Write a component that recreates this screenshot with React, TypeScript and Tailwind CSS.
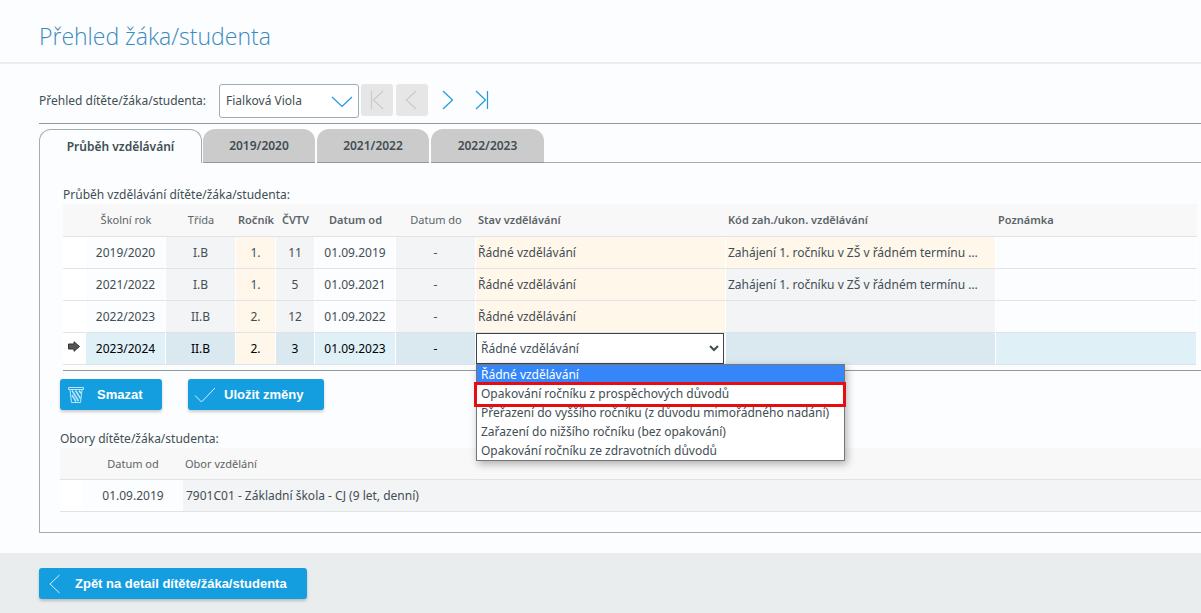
import { useState } from 'react'

type Row = { year: string; cls: string; grade: string; ctv: string; from: string; to: string; code: string }

const ROWS: Row[] = [
  { year: '2019/2020', cls: 'I.B', grade: '1.', ctv: '11', from: '01.09.2019', to: '-', code: 'Zahájení 1. ročníku v ZŠ v řádném termínu …' },
  { year: '2021/2022', cls: 'I.B', grade: '1.', ctv: '5', from: '01.09.2021', to: '-', code: 'Zahájení 1. ročníku v ZŠ v řádném termínu …' },
  { year: '2022/2023', cls: 'II.B', grade: '2.', ctv: '12', from: '01.09.2022', to: '-', code: '' },
  { year: '2023/2024', cls: 'II.B', grade: '2.', ctv: '3', from: '01.09.2023', to: '-', code: '' },
]

const STATES = [
  'Řádné vzdělávání',
  'Opakování ročníku z prospěchových důvodů',
  'Přeřazení do vyššího ročníku (z důvodu mimořádného nadání)',
  'Zařazení do nižšího ročníku (bez opakování)',
  'Opakování ročníku ze zdravotních důvodů',
]

const TABS = ['Průběh vzdělávání', '2019/2020', '2021/2022', '2022/2023']

const BTN = 'flex h-[31px] items-center rounded-[3px] bg-[#149edf] text-white shadow-[0_2px_3px_rgba(0,0,0,0.2)]'
const BTN_TEXT = "font-['Liberation_Sans',sans-serif] text-[13px] font-bold"

function NavIcon({ d, className }: { d: string; className: string }) {
  return (
    <svg viewBox="0 0 32 32" className={`size-8 ${className}`} fill="none" stroke="currentColor" strokeWidth="1.2" aria-hidden="true">
      <path d={d} />
    </svg>
  )
}

function Toolbar() {
  return (
    <div className="flex items-start border-b border-[#8f999f] pb-[5px]">
      <label htmlFor="student" className="mr-1.5 w-[174px] whitespace-nowrap leading-[34px]">Přehled dítěte/žáka/studenta:</label>
      <div className="relative mr-0.5">
        <select id="student" className="h-[34px] w-[140px] appearance-none rounded-[3px] border border-[#a0adb4] bg-white px-1.5">
          <option>Fialková Viola</option>
        </select>
        <svg viewBox="0 0 22 12" className="pointer-events-none absolute right-1.5 top-3 h-3 w-[22px] text-[#1b9be0]" fill="none" stroke="currentColor" strokeWidth="1.2" aria-hidden="true">
          <path d="M1 1l10 9.500L21 1" />
        </svg>
      </div>
      <div className="flex gap-[3px]">
        <button disabled aria-label="První" className="rounded-[3px] bg-[#e6e6e6]">
          <NavIcon className="text-[#cbcbcb]" d="M10.500 7v18M22 7l-9.500 9 9.500 9" />
        </button>
        <button disabled aria-label="Předchozí" className="rounded-[3px] bg-[#e6e6e6]">
          <NavIcon className="text-[#cbcbcb]" d="M20 7l-9.500 9 9.500 9" />
        </button>
        <button aria-label="Další"><NavIcon className="text-[#1b9be0]" d="M12 7l9.500 9-9.500 9" /></button>
        <button aria-label="Poslední"><NavIcon className="text-[#1b9be0]" d="M10 7l9.500 9-9.500 9M21.500 7v18" /></button>
      </div>
    </div>
  )
}

function HistoryTable() {
  const [state, setState] = useState(STATES[0])
  const last = ROWS.length - 1

  return (
    <table className="w-full table-fixed border-separate border-spacing-0">
      <colgroup>
        <col className="w-[23px]" />
        <col className="w-20" />
        <col className="w-[70px]" />
        <col className="w-10" />
        <col className="w-[39px]" />
        <col className="w-[81px]" />
        <col className="w-20" />
        <col className="w-[250px]" />
        <col className="w-[270px]" />
        <col />
      </colgroup>
      <thead>
        <tr className="h-[33px] bg-[#f8f8f8] text-[11px] text-[#5c6468] *:border-b *:border-[#e0e3e4] *:p-0 *:font-normal *:whitespace-nowrap">
          <th />
          <th>Školní rok</th>
          <th>Třída</th>
          <th className="font-semibold!">Ročník</th>
          <th className="font-semibold!">ČVTV</th>
          <th className="font-semibold!">Datum od</th>
          <th>Datum do</th>
          <th className="pl-0.5! text-left font-semibold!">Stav vzdělávání</th>
          <th className="pl-0.5! text-left font-semibold!">Kód zah./ukon. vzdělávání</th>
          <th className="pl-0.5! text-left font-semibold!">Poznámka</th>
        </tr>
      </thead>
      <tbody>
        {ROWS.map((r, i) => {
          const active = i === last
          const dim = active ? 'bg-[#d9e9ef]' : 'bg-[#f3f4f6]'
          const base = active ? 'bg-[#dff0f7]' : ''
          const warm = 'bg-[#fff7ea]'
          return (
            <tr key={r.year} className={`h-8 text-center *:border-b *:border-r *:border-b-[#e0e3e4] *:border-r-white *:p-0 ${active ? 'text-black' : ''}`}>
              <td className="bg-white">
                {active && (
                  <svg viewBox="0 0 12 11" className="mx-auto mb-1 h-[11px] w-3" aria-label="Aktivní řádek">
                    <path d="M.5 3h5.500V.7L11.500 5.500 6 10.300V8H.5z" fill="#555" stroke="#333" />
                  </svg>
                )}
              </td>
              <td className={base}>{r.year}</td>
              <td className={dim}>{r.cls}</td>
              <td className={warm}>{r.grade}</td>
              <td className={dim}>{r.ctv}</td>
              <td className={base}>{r.from}</td>
              <td className={dim}>{r.to}</td>
              {active ? (
                <td className="text-left align-bottom text-[#424e54]">
                  <div className="relative">
                    <select
                      aria-label="Stav vzdělávání"
                      value={state}
                      onChange={e => setState(e.target.value)}
                      className="block h-[31px] w-[248px] appearance-none border border-[#3c4548] bg-white pl-1 pr-5"
                    >
                      {STATES.map(s => <option key={s}>{s}</option>)}
                    </select>
                    <svg viewBox="0 0 10 7" className="pointer-events-none absolute left-[233px] top-3 h-[7px] w-2.5" fill="none" stroke="#424e54" strokeWidth="2" aria-hidden="true">
                      <path d="M1 1l4 4 4-4" />
                    </svg>
                    <ul role="listbox" aria-label="Možnosti stavu" className="absolute left-0 top-[31px] z-10 w-[369px] border border-[#767676] bg-white shadow-[2px_3px_8px_rgba(0,0,0,0.3)]">
                      {STATES.map(s => (
                        <li
                          key={s}
                          role="option"
                          aria-selected={s === state}
                          onClick={() => setState(s)}
                          className={`h-[19px] cursor-default whitespace-nowrap px-1 leading-[19px] ${s === state ? 'bg-[#3586f8] text-white' : ''}`}
                        >
                          {s}
                        </li>
                      ))}
                    </ul>
                    {/* highlight around the second option */}
                    <div className="pointer-events-none absolute -left-0.5 top-[49px] z-20 h-[25px] w-[372px] border-[3px] border-[#e60d12]" />
                  </div>
                </td>
              ) : (
                <td className={`pl-0.5! text-left ${warm}`}>{STATES[0]}</td>
              )}
              <td className={`pl-0.5! text-left whitespace-nowrap ${i === 0 ? warm : dim}`}>{r.code}</td>
              <td className={base} />
            </tr>
          )
        })}
      </tbody>
    </table>
  )
}

function FieldsTable() {
  return (
    <table className="w-full table-fixed border-separate border-spacing-0">
      <colgroup>
        <col className="w-[23px]" />
        <col className="w-[100px]" />
        <col />
      </colgroup>
      <thead>
        <tr className="h-8 bg-[#f8f8f8] text-[11px] text-[#5c6468] *:border-b *:border-[#e0e3e4] *:p-0 *:font-normal">
          <th />
          <th>Datum od</th>
          <th className="pl-0.5! text-left">Obor vzdělání</th>
        </tr>
      </thead>
      <tbody>
        <tr className="h-8 *:border-b *:border-[#e0e3e4] *:p-0">
          <td className="bg-white" />
          <td className="text-center">01.09.2019</td>
          <td className="bg-[#f3f4f6] pl-[3px]!">7901C01 - Základní škola - CJ (9 let, denní)</td>
        </tr>
      </tbody>
    </table>
  )
}

export default function App() {
  const [tab, setTab] = useState(0)

  return (
    <div className="min-h-screen overflow-hidden bg-[#fbfdfe] font-['Noto_Sans','Open_Sans',sans-serif] text-xs leading-[18px] text-[#424e54]">
      <header className="border-b-2 border-[#e8eef0] pl-[39px] pt-[19px] pb-[9px]">
        <h1 className="font-['Open_Sans',sans-serif] text-[23px] leading-[34px] font-light text-[#3a8abf]">Přehled žáka/studenta</h1>
      </header>

      <main className="pl-[39px] pt-5">
        <Toolbar />

        <div className="flex pt-[5px]" role="tablist">
          {TABS.map((t, i) => (
            <button
              key={t}
              role="tab"
              aria-selected={i === tab}
              onClick={() => setTab(i)}
              className={`h-[34px] rounded-t-xl pt-px font-semibold ${i === tab ? 'mr-px w-[163px] border border-b-0 border-[#a0adb4]' : 'mr-0.5 w-28 border-b border-b-[#8f999f] bg-[#cbcbcb] last-of-type:mr-0 last-of-type:w-[113px]'}`}
            >
              {t}
            </button>
          ))}
          <div className="flex-1 border-b border-[#a0adb4]" />
        </div>

        <section className="border-b border-l border-[#a0adb4] pt-[23px] pb-5 pl-5">
          <div className="pl-[3px]">
            <p>Průběh vzdělávání dítěte/žáka/studenta:</p>
            <div className="border-b border-[#8f999f] pr-1 pb-[5px]">
              <HistoryTable />
            </div>
          </div>

          <div className="mt-2 flex gap-[26px]">
            <button className={`${BTN} w-[102px] pl-2`}>
              <svg viewBox="0 0 16 16" className="mr-[13px] size-4" fill="none" stroke="#bfe6f8" aria-hidden="true">
                <path d="M.5.5h15v2H.5zM2 3l1.500 12.500h9L14 3" />
                <path d="M4 3.500l6.500 10.500M7.500 3.500l5 8M4 8l4 6.500M11 3.500l2 3" strokeWidth="1.500" />
              </svg>
              <span className={BTN_TEXT}>Smazat</span>
            </button>
            <button className={`${BTN} w-[136px] pl-1.5`}>
              <svg viewBox="0 0 22 16" className="mr-2 h-4 w-[22px]" fill="none" stroke="#d9f1fc" aria-hidden="true">
                <path d="M1 8.500L7.500 15 21 1" />
              </svg>
              <span className={BTN_TEXT}>Uložit změny</span>
            </button>
          </div>

          <p className="mt-5">Obory dítěte/žáka/studenta:</p>
          <FieldsTable />
        </section>
      </main>

      <footer className="mt-5 bg-[#e9edee] pt-[15px] pb-3.5 pl-[39px]">
        <a href="#detail" className={`${BTN} w-[268px] pl-2.5`}>
          <svg viewBox="0 0 12 20" className="mr-3.5 h-5 w-3" fill="none" stroke="#d9f1fc" aria-hidden="true">
            <path d="M10.500 1L1 10l9.500 9" />
          </svg>
          <span className={BTN_TEXT}>Zpět na detail dítěte/žáka/studenta</span>
        </a>
      </footer>
    </div>
  )
}
